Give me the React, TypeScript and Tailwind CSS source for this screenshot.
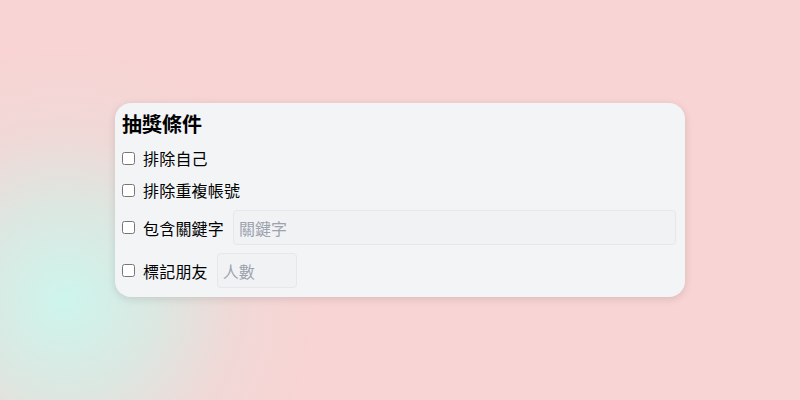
export default function App() {
  return (
    <div
      className="w-full h-[400px] flex items-center justify-center bg-[#f8d4d4] bg-[radial-gradient(circle_at_65px_300px,#cdf5ec_0px,rgba(210,238,230,0.75)_90px,rgba(225,225,220,0.35)_170px,rgba(248,212,212,0)_250px)]"
      style={{ fontFamily: '"Noto Sans CJK TC", "Noto Sans", sans-serif' }}
    >
      <div className="w-[570px] bg-[#f3f4f6] rounded-2xl shadow-[0_2px_8px_rgba(0,0,0,0.12)] pl-[7px] pr-[9px] pt-[7px] pb-[9px] flex flex-col gap-2 text-black">
        <h2 className="text-xl font-bold leading-7">抽獎條件</h2>
        <label className="flex items-center gap-2 h-6 text-base">
          <input type="checkbox" />
          <span className="tracking-[0.2px]">排除自己</span>
        </label>
        <label className="flex items-center gap-2 h-6 text-base">
          <input type="checkbox" />
          <span className="tracking-[0.2px]">排除重複帳號</span>
        </label>
        <div className="flex items-center gap-2 text-base">
          <input type="checkbox" />
          <span className="tracking-[0.2px]">包含關鍵字</span>
          <input
            type="text"
            placeholder="關鍵字"
            className="flex-1 ml-px h-[35px] rounded border border-[#e5e7eb] bg-[#f1f2f4] px-[5px] text-base placeholder:text-[#9ca3af] outline-none"
          />
        </div>
        <div className="flex items-center gap-2 text-base">
          <input type="checkbox" />
          <span className="tracking-[0.2px]">標記朋友</span>
          <input
            type="number"
            placeholder="人數"
            className="w-[80px] ml-px h-[35px] rounded border border-[#e5e7eb] bg-[#f1f2f4] px-[5px] text-base placeholder:text-[#9ca3af] outline-none"
          />
        </div>
      </div>
    </div>
  );
}
